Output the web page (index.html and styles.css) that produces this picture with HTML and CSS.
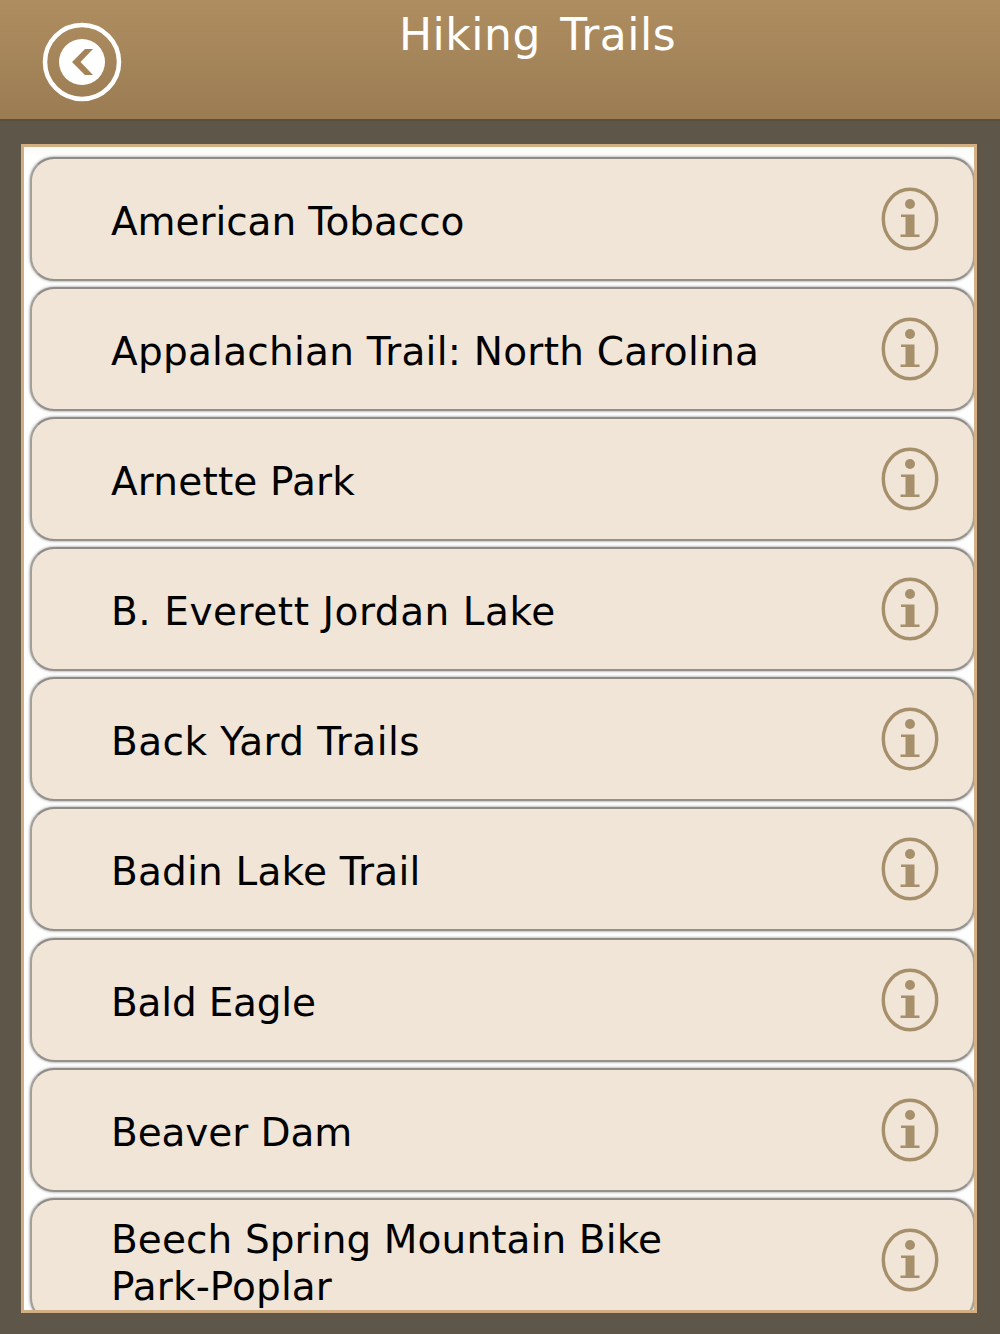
FILE: index.html
```html
<!DOCTYPE html>
<html lang="en">
<head>
<meta charset="utf-8">
<title>Hiking Trails</title>
<link rel="stylesheet" href="styles.css">
</head>
<body>
<svg width="0" height="0" class="defs">
  <symbol id="info" viewBox="0 0 58 64">
    <ellipse cx="29" cy="32" rx="26.700" ry="29.700" fill="none" stroke="#a68f6b" stroke-width="3.400"/>
    <circle cx="29" cy="17" r="5" fill="#a68f6b"/>
    <path d="M20 27.500H33.500V47.500H38.500V50H19.500V47.500H24.500V30H20Z" fill="#a68f6b"/>
  </symbol>
</svg>
<header class="topbar">
  <button class="back" aria-label="Back">
    <svg viewBox="0 0 80 80" width="80" height="80">
      <circle cx="40" cy="40" r="37" fill="none" stroke="#fff" stroke-width="4.500"/>
      <circle cx="40" cy="40" r="23" fill="#fff"/>
      <path d="M30 40L43 27H51L38.500 40L51 53H43Z" fill="#a48358"/>
    </svg>
  </button>
  <h1 class="title">Hiking Trails</h1>
</header>
<main class="panel">
  <ul class="list">
    <li class="row"><span class="name">American Tobacco</span><svg class="info"><use href="#info"/></svg></li>
    <li class="row"><span class="name">Appalachian Trail: North Carolina</span><svg class="info"><use href="#info"/></svg></li>
    <li class="row"><span class="name">Arnette Park</span><svg class="info"><use href="#info"/></svg></li>
    <li class="row"><span class="name">B. Everett Jordan Lake</span><svg class="info"><use href="#info"/></svg></li>
    <li class="row"><span class="name">Back Yard Trails</span><svg class="info"><use href="#info"/></svg></li>
    <li class="row"><span class="name">Badin Lake Trail</span><svg class="info"><use href="#info"/></svg></li>
    <li class="row"><span class="name">Bald Eagle</span><svg class="info"><use href="#info"/></svg></li>
    <li class="row"><span class="name">Beaver Dam</span><svg class="info"><use href="#info"/></svg></li>
    <li class="row"><span class="name">Beech Spring Mountain Bike<br>Park-Poplar</span><svg class="info"><use href="#info"/></svg></li>
  </ul>
</main>
</body>
</html>
```
FILE: styles.css
```css
* { box-sizing: border-box; }
html, body { margin: 0; padding: 0; }
body {
  width: 1000px;
  height: 1334px;
  background: #5e5649;
  font-family: "DejaVu Sans", sans-serif;
  overflow: hidden;
}
.defs { position: absolute; }
.topbar {
  height: 121px;
  background: linear-gradient(#ae8e60, #9b7c53);
  border-bottom: 2px solid #57503f;
  display: flex;
  position: relative;
}
.back {
  position: absolute;
  left: 42px;
  top: 22px;
  width: 80px;
  height: 80px;
  padding: 0;
  border: 0;
  background: none;
}
.back svg { display: block; }
.title {
  margin: 10px 0 0 399px;
  font-size: 44px;
  line-height: 50px;
  font-weight: 400;
  letter-spacing: 0.5px;
  word-spacing: 5px;
  color: #fff;
}
.panel {
  margin: 23px 0 0 21px;
  width: 956px;
  height: 1169px;
  border: 3px solid #d3b084;
  background: #fff;
  overflow: hidden;
}
.list {
  list-style: none;
  margin: 0;
  padding: 10px 0 0 6px;
  background: linear-gradient(#faf9f5, #fff 10px);
}
.row {
  height: 124px;
  margin-bottom: 6.100px;
  width: 945px;
  border: 2px solid #a3a09a;
  border-top-color: #8f8c86;
  border-bottom-color: #94918b;
  border-radius: 24px;
  background: #f1e5d7;
  box-shadow: 0 0 3px rgba(80, 80, 80, 0.7);
  display: flex;
  align-items: center;
  justify-content: space-between;
  padding: 0 34px 0 79px;
}
.name {
  font-size: 39px;
  line-height: 47px;
  padding-top: 5px;
  color: #000;
}
.row:nth-child(1) .name { letter-spacing: -0.07px; }
.row:nth-child(2) .name { letter-spacing: 0.25px; }
.row:nth-child(3) .name { letter-spacing: 0.17px; }
.row:nth-child(4) .name { letter-spacing: 0.55px; }
.row:nth-child(5) .name { letter-spacing: 0.44px; }
.row:nth-child(6) .name { letter-spacing: 0.2px; }
.row:nth-child(7) .name { letter-spacing: -0.2px; }
.row:nth-child(8) .name { letter-spacing: -0.1px; }
.row:nth-child(9) .name { letter-spacing: 0.1px; padding-top: 7px; }
.info {
  width: 58px;
  height: 64px;
  flex: none;
}
```
